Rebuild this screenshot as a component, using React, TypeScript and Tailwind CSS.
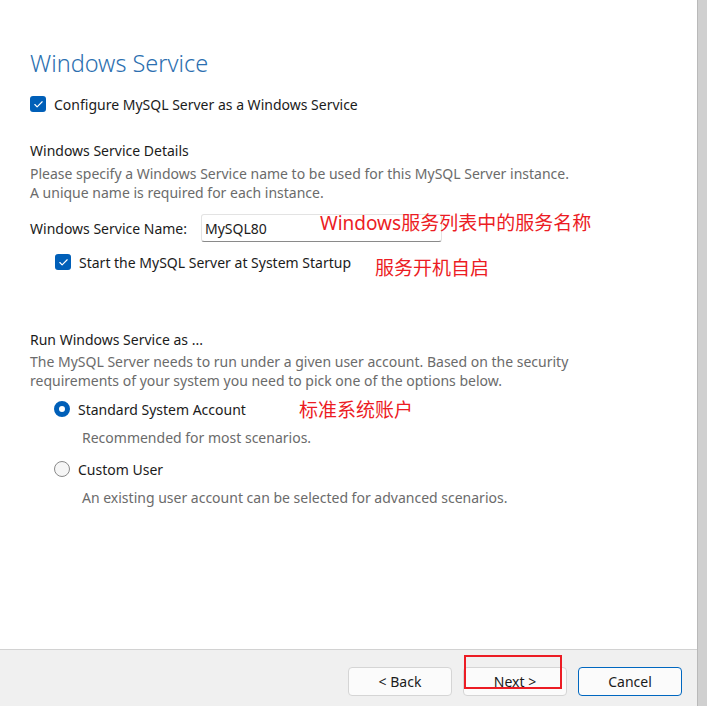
import { Check } from "lucide-react";

const font = { fontFamily: '"Noto Sans", "Noto Sans CJK SC", sans-serif' };

function CheckBox() {
  return (
    <span className="flex h-4 w-4 shrink-0 items-center justify-center rounded-[3px] bg-[#005fb8]">
      <Check size={11} strokeWidth={2.5} className="text-white" />
    </span>
  );
}

function Radio({ on }: { on?: boolean }) {
  return on ? (
    <span className="h-4 w-4 shrink-0 rounded-full border-[5px] border-[#005fb8] bg-white" />
  ) : (
    <span className="h-4 w-4 shrink-0 rounded-full border border-[#8a8a8a] bg-[#f6f6f6]" />
  );
}

function Note({ children, className }: { children: string; className: string }) {
  return (
    <span className={`absolute whitespace-nowrap text-[19px] leading-[24px] text-[#ec1c24] ${className}`}>
      {children}
    </span>
  );
}

function Btn({ label, primary }: { label: string; primary?: boolean }) {
  return (
    <button
      className={`h-[29px] w-[104px] rounded-[4px] border bg-[#fbfbfb] text-[14px] text-[#1b1b1b] ${
        primary ? "border-[#0067c0]" : "border-[#d5d5d5]"
      }`}
    >
      {label}
    </button>
  );
}

export default function App() {
  return (
    <div className="flex h-[706px] w-[707px] overflow-hidden bg-white text-[14px] leading-[19px] text-[#1b1b1b]" style={font}>
      <div className="flex w-[698px] flex-col border-r border-[#b9b9b9]">
        <div className="flex-1 pl-[30px] pt-[48px]">
          <h1 className="text-[23.5px] font-light leading-[31px] text-[#2c6fb0]">Windows Service</h1>

          <div className="mt-[15px] flex h-5 items-center gap-2">
            <CheckBox />
            <span>Configure MySQL Server as a Windows Service</span>
          </div>

          <div className="mt-[27px]">Windows Service Details</div>
          <div className="mt-[4px] text-[#6b6b6b]">
            Please specify a Windows Service name to be used for this MySQL Server instance.
            <br />
            A unique name is required for each instance.
          </div>

          <div className="relative mt-[12px] flex h-7 items-center">
            <span className="w-[171px]">Windows Service Name:</span>
            <div className="flex h-7 w-[241px] items-center rounded-[3px] border border-[#e3e3e3] border-b-[#8a8a8a] pl-[3px]">
              MySQL80
            </div>
            <Note className="left-[290px] top-[-3px]">Windows服务列表中的服务名称</Note>
          </div>

          <div className="relative mt-[10px] flex h-5 items-center gap-2 pl-[25px]">
            <CheckBox />
            <span>Start the MySQL Server at System Startup</span>
            <Note className="left-[345px] top-[4px]">服务开机自启</Note>
          </div>

          <div className="mt-[58px]">Run Windows Service as ...</div>
          <div className="mt-[3px] text-[#6b6b6b]">
            The MySQL Server needs to run under a given user account. Based on the security
            <br />
            requirements of your system you need to pick one of the options below.
          </div>

          <div className="relative mt-[9px] flex h-5 items-center gap-2 pl-[24px]">
            <Radio on />
            <span>Standard System Account</span>
            <Note className="left-[269px] top-[-1px]">标准系统账户</Note>
          </div>
          <div className="mt-[9px] pl-[52px] text-[#6b6b6b]">Recommended for most scenarios.</div>

          <div className="mt-[12px] flex h-5 items-center gap-2 pl-[24px]">
            <Radio />
            <span>Custom User</span>
          </div>
          <div className="mt-[9px] pl-[52px] text-[#6b6b6b]">
            An existing user account can be selected for advanced scenarios.
          </div>
        </div>

        <div className="relative flex h-[57px] items-start justify-end gap-[11px] border-t border-[#d2d2d2] bg-[#f0f0f0] pr-[15px] pt-[17px]">
          <Btn label="< Back" />
          <Btn label="Next >" />
          <Btn label="Cancel" primary />
          <span className="absolute left-[464px] top-[5px] h-[34px] w-[98px] border-2 border-[#ec1c24]" />
        </div>
      </div>
      <div className="flex-1 bg-[#d0d0d0]" />
    </div>
  );
}
